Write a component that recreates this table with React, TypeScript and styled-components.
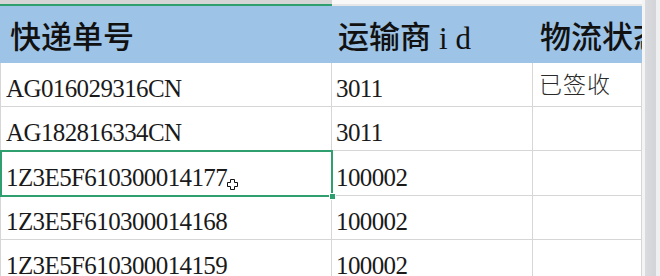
import React from 'react';
import styled, { createGlobalStyle } from 'styled-components';

const GlobalStyle = createGlobalStyle`
  *, *::before, *::after {
    box-sizing: border-box;
  }
  html, body {
    margin: 0;
    padding: 0;
    background: #ffffff;
    overflow: hidden;
  }
`

const COLS = '332px 201px 109px';

const Page = styled.div`
  display: flex;
  width: 660px;
  height: 276px;
  overflow: hidden;
`

const Sheet = styled.div`
  position: relative;
  display: flex;
  flex-direction: column;
  width: 645px;
  border-right: 3px solid #f4f4f4;
`

const Scrollbar = styled.div`
  flex: 1;
  display: flex;
  background: #eef0f2;
`

const ScrollTrack = styled.div`
  width: 11px;
  background: linear-gradient(to right, #d9dbde, #d2d4d7);
`

const StripRow = styled.div`
  display: grid;
  grid-template-columns: ${COLS};
  height: 6px;
  flex-shrink: 0;
`

const StripCell = styled.div<{ $active?: boolean }>`
  background: ${p => (p.$active ? '#d5d5d5' : '#f8f8f8')};
  border-bottom: 2px solid ${p => (p.$active ? '#2f9f70' : '#e6e6e6')};
`

const Row = styled.div<{ $height: number }>`
  display: grid;
  grid-template-columns: ${COLS};
  height: ${p => p.$height}px;
  flex-shrink: 0;
`

const HeaderCell = styled.div<{ $pad: number }>`
  display: flex;
  align-items: flex-end;
  padding: 0 0 6px ${p => p.$pad}px;
  background: #9dc3e6;
  color: #111;
  font-family: "Liberation Serif", "Noto Sans CJK SC", serif;
  font-size: 31px;
  font-weight: 500;
  white-space: nowrap;
  overflow: hidden;
`

const Latin = styled.span`
  letter-spacing: 8px;
  padding-left: 8px;
  font-weight: 400;
`

const Cell = styled.div<{ $pad: number }>`
  display: flex;
  align-items: flex-end;
  padding: 0 0 3px ${p => p.$pad}px;
  border-right: 1px solid #d6d6d6;
  border-bottom: 1px solid #d6d6d6;
  color: #1a1a1a;
  font-family: "Liberation Serif", "Noto Sans CJK SC", serif;
  font-size: 25px;
  letter-spacing: -0.6px;
  white-space: nowrap;
  overflow: hidden;
  &:first-child {
    border-left: 1px solid #d6d6d6;
  }
`

const CjkText = styled.span`
  font-family: "Noto Sans CJK SC", sans-serif;
  font-size: 23px;
  font-weight: 300;
  color: #2a2a2a;
  letter-spacing: 1px;
  margin-bottom: 3px;
`

const Selection = styled.div`
  position: absolute;
  left: 0;
  top: 150px;
  width: 333px;
  height: 47px;
  border: 2px solid #2f9f70;
  pointer-events: none;
`

const FillHandle = styled.div`
  position: absolute;
  right: -5px;
  bottom: -5px;
  width: 7px;
  height: 7px;
  background: #2f9f70;
  border: 1px solid #ffffff;
`

const Cursor = styled.svg`
  position: absolute;
  left: 227px;
  top: 179px;
`

const rows = [
  ['AG016029316CN', '3011', '已签收'],
  ['AG182816334CN', '3011', ''],
  ['1Z3E5F610300014177', '100002', ''],
  ['1Z3E5F610300014168', '100002', ''],
  ['1Z3E5F610300014159', '100002', ''],
];

const heights = [44, 44, 45, 44, 44];

function App() {
  return (
    <Page>
      <GlobalStyle />
      <Sheet>
        <StripRow>
          <StripCell $active />
          <StripCell />
          <StripCell />
        </StripRow>
        <Row $height={57}>
          <HeaderCell $pad={10}>快递单号</HeaderCell>
          <HeaderCell $pad={6}>运输商<Latin>id</Latin></HeaderCell>
          <HeaderCell $pad={7}>物流状态</HeaderCell>
        </Row>
        {rows.map((r, i) => (
          <Row key={i} $height={heights[i]}>
            <Cell $pad={5}>{r[0]}</Cell>
            <Cell $pad={4}>{r[1]}</Cell>
            <Cell $pad={6}>{r[2] && <CjkText>{r[2]}</CjkText>}</Cell>
          </Row>
        ))}
        <Selection>
          <FillHandle />
        </Selection>
        <Cursor width="11" height="11" viewBox="0 0 11 11">
          <path
            d="M3.5 0.5h4v3h3v4h-3v3h-4v-3h-3v-4h3z"
            fill="#ffffff"
            stroke="#111111"
            strokeWidth="1"
          />
        </Cursor>
      </Sheet>
      <Scrollbar>
        <ScrollTrack />
      </Scrollbar>
    </Page>
  );
}

export default App;
